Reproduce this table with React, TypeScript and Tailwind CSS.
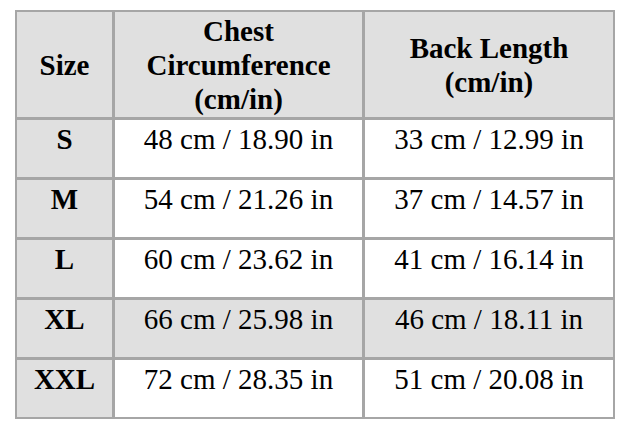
import { Fragment } from "react";

const rows = [
  { size: "S", chest: "48 cm / 18.90 in", back: "33 cm / 12.99 in", shaded: false },
  { size: "M", chest: "54 cm / 21.26 in", back: "37 cm / 14.57 in", shaded: false },
  { size: "L", chest: "60 cm / 23.62 in", back: "41 cm / 16.14 in", shaded: false },
  { size: "XL", chest: "66 cm / 25.98 in", back: "46 cm / 18.11 in", shaded: true },
  { size: "XXL", chest: "72 cm / 28.35 in", back: "51 cm / 20.08 in", shaded: false },
];

export default function App() {
  return (
    <div className="w-[625px] h-[431px] bg-white pt-[10px] pl-[15px]" style={{ fontFamily: '"Liberation Serif", "Times New Roman", serif' }}>
      <div className="w-[600px] grid grid-cols-[95px_247px_248px] grid-rows-[105px_repeat(5,57px)] gap-[3px] p-[2px] bg-[#a6a6a6] text-[29px] leading-[34px] text-black">
        {/* header */}
        <div className="bg-[#e0e0e0] flex items-center justify-center font-bold">Size</div>
        <div className="bg-[#e0e0e0] flex items-center justify-center text-center font-bold">
          Chest<br />Circumference<br />(cm/in)
        </div>
        <div className="bg-[#e0e0e0] flex items-center justify-center text-center font-bold">
          Back Length<br />(cm/in)
        </div>

        {rows.map((r) => (
          <Fragment key={r.size}>
            <div className="bg-[#e0e0e0] flex justify-center pt-[2px] font-bold">{r.size}</div>
            <div className={`${r.shaded ? "bg-[#e0e0e0]" : "bg-white"} flex justify-center pt-[2px]`}>{r.chest}</div>
            <div className={`${r.shaded ? "bg-[#e0e0e0]" : "bg-white"} flex justify-center pt-[2px]`}>{r.back}</div>
          </Fragment>
        ))}
      </div>
    </div>
  );
}
